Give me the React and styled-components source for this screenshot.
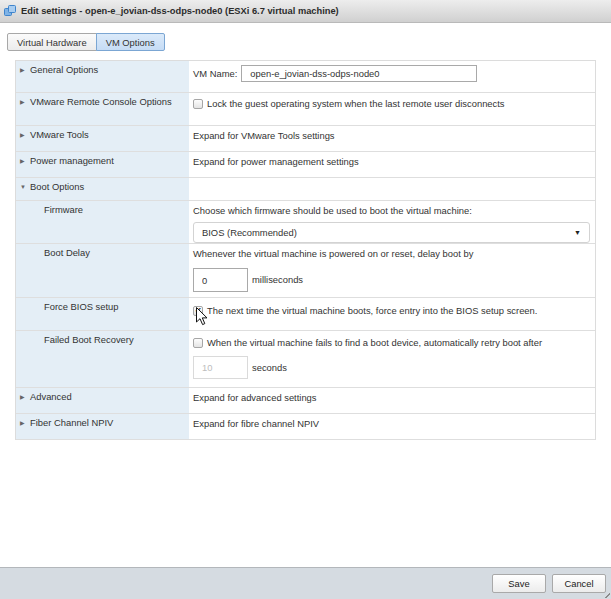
import React from 'react';
import styled, { createGlobalStyle } from 'styled-components';

const GlobalStyle = createGlobalStyle`
  html, body { margin: 0; padding: 0; background: #fff; }
  body {
    font-family: "Liberation Sans", Arial, sans-serif;
    font-size: 9.4px;
    color: #333;
  }
`;

const rows = [
  { label: 'General Options', arrow: 'right', h: 32, kind: 'name' },
  { label: 'VMware Remote Console Options', arrow: 'right', h: 33, kind: 'lock' },
  { label: 'VMware Tools', arrow: 'right', h: 26, text: 'Expand for VMware Tools settings' },
  { label: 'Power management', arrow: 'right', h: 26, text: 'Expand for power management settings' },
  { label: 'Boot Options', arrow: 'down', h: 23, text: '' },
  { label: 'Firmware', sub: true, h: 43, kind: 'firmware' },
  { label: 'Boot Delay', sub: true, h: 54, kind: 'delay' },
  { label: 'Force BIOS setup', sub: true, h: 33, kind: 'bios' },
  { label: 'Failed Boot Recovery', sub: true, h: 57, kind: 'retry' },
  { label: 'Advanced', arrow: 'right', h: 26, text: 'Expand for advanced settings' },
  { label: 'Fiber Channel NPIV', arrow: 'right', h: 26, text: 'Expand for fibre channel NPIV' },
];

function VmIcon() {
  return (
    <svg width="12" height="11" viewBox="0 0 12 11">
      <rect x="0.5" y="3.5" width="7" height="7" rx="1" fill="#7fb3e6" stroke="#3f84cc" />
      <rect x="4.5" y="0.5" width="7" height="7" rx="1" fill="#a9cdf0" stroke="#3f84cc" />
    </svg>
  );
}

function Cursor() {
  return (
    <svg width="12" height="19" viewBox="0 0 12 19">
      <path
        d="M0.5 0.5 L0.5 15 L4 11.7 L6.6 17.6 L8.8 16.6 L6.3 10.9 L11 10.9 Z"
        fill="#fff"
        stroke="#111"
        strokeWidth="1"
        strokeLinejoin="round"
      />
    </svg>
  );
}

export default function App() {
  const renderValue = (row) => {
    switch (row.kind) {
      case 'name':
        return (
          <Line>
            VM Name:
            <TextField $w={236} $h={17} $ml={4} defaultValue="open-e_jovian-dss-odps-node0" />
          </Line>
        );
      case 'lock':
        return (
          <Line $top={1}>
            <Check />
            Lock the guest operating system when the last remote user disconnects
          </Line>
        );
      case 'firmware':
        return (
          <>
            <Line>Choose which firmware should be used to boot the virtual machine:</Line>
            <Select>
              <span>BIOS (Recommended)</span>
              <Caret>▼</Caret>
            </Select>
          </>
        );
      case 'delay':
        return (
          <>
            <Line>Whenever the virtual machine is powered on or reset, delay boot by</Line>
            <Line $top={8}>
              <TextField $w={55} $h={24} $mr={4} defaultValue="0" />
              milliseconds
            </Line>
          </>
        );
      case 'bios':
        return (
          <Line $top={3}>
            <CheckWrap>
              <Check $checked>✔</Check>
              <CursorSpot>
                <Cursor />
              </CursorSpot>
            </CheckWrap>
            The next time the virtual machine boots, force entry into the BIOS setup screen.
          </Line>
        );
      case 'retry':
        return (
          <>
            <Line $top={2}>
              <Check />
              When the virtual machine fails to find a boot device, automatically retry boot after
            </Line>
            <Line $top={7}>
              <TextField $w={55} $h={23} $mr={4} $disabled defaultValue="10" disabled />
              seconds
            </Line>
          </>
        );
      default:
        return <Line>{row.text}</Line>;
    }
  };

  return (
    <Page>
      <GlobalStyle />
      <TitleBar>
        <VmIcon />
        <span>Edit settings - open-e_jovian-dss-odps-node0 (ESXi 6.7 virtual machine)</span>
      </TitleBar>

      <Body>
        <Tabs>
          <Tab>Virtual Hardware</Tab>
          <Tab $active>VM Options</Tab>
        </Tabs>

        <Table>
          {rows.map((row) => (
            <Row key={row.label} $h={row.h}>
              <LabelCell $sub={row.sub}>
                {row.arrow && <Arrow>{row.arrow === 'down' ? '▼' : '▶'}</Arrow>}
                {row.label}
              </LabelCell>
              <ValueCell>{renderValue(row)}</ValueCell>
            </Row>
          ))}
        </Table>
      </Body>

      <Footer>
        <Button>Save</Button>
        <Button>Cancel</Button>
        <Grip />
      </Footer>
    </Page>
  );
}

const Page = styled.div`
  height: 100vh;
  display: flex;
  flex-direction: column;
  overflow: hidden;
`;

const TitleBar = styled.div`
  height: 23px;
  box-sizing: border-box;
  display: flex;
  align-items: center;
  gap: 5px;
  padding: 0 0 1px 4px;
  background: linear-gradient(#ededed, #d0d0d0);
  border-bottom: 1px solid #b9b9b9;
  font-weight: bold;
  font-size: 9.3px;
  color: #2b2b2b;
`;

const Body = styled.div`
  flex: 1;
  padding: 10px 15px 0 7px;
`;

const Tabs = styled.div`
  display: flex;
  height: 18px;
`;

const Tab = styled.div`
  box-sizing: border-box;
  height: 18px;
  padding: 0 9px;
  display: flex;
  align-items: center;
  border: 1px solid ${(p) => (p.$active ? '#7ba6d3' : '#a8a8a8')};
  background: ${(p) => (p.$active ? 'linear-gradient(#dbeafa, #c6dcf5)' : 'linear-gradient(#fbfbfb, #ececec)')};
  border-radius: ${(p) => (p.$active ? '0 2px 2px 0' : '2px 0 0 2px')};
  margin-left: ${(p) => (p.$active ? '-1px' : '0')};
  color: #333;
`;

const Table = styled.div`
  margin: 9px 0 0 8px;
  border: 1px solid #dcdcdc;
  border-bottom: none;
`;

const Row = styled.div`
  display: grid;
  grid-template-columns: 173px 1fr;
  height: ${(p) => p.$h}px;
  box-sizing: border-box;
  border-bottom: 1px solid #dedede;
`;

const LabelCell = styled.div`
  background: #e4eef6;
  padding: 3px 0 0 ${(p) => (p.$sub ? '28px' : '4px')};
  line-height: 12px;
  display: flex;
  align-items: flex-start;
  gap: 4px;
`;

const Arrow = styled.span`
  font-size: 6px;
  color: #666;
  line-height: 12px;
  width: 6px;
`;

const ValueCell = styled.div`
  padding: 4px 5px 0 4px;
  line-height: 12px;
`;

const Line = styled.div`
  display: flex;
  align-items: center;
  min-height: 12px;
  margin-top: ${(p) => p.$top || 0}px;
  white-space: nowrap;
`;

const TextField = styled.input`
  box-sizing: border-box;
  width: ${(p) => p.$w}px;
  height: ${(p) => p.$h}px;
  margin: 0 ${(p) => p.$mr || 0}px 0 ${(p) => p.$ml || 0}px;
  padding: 0 8px 0 4px;
  border: 1px solid ${(p) => (p.$disabled ? '#dadada' : '#a9a9a9')};
  border-radius: 0;
  background: #fff;
  font-family: "Liberation Sans", Arial, sans-serif;
  font-size: 9.4px;
  color: ${(p) => (p.$disabled ? '#bdbdbd' : '#333')};
  outline: none;
  &:first-child {
    padding-left: 8px;
  }
`;

const Check = styled.span`
  box-sizing: border-box;
  width: 10px;
  height: 10px;
  margin-right: 4px;
  border: 1px solid #a6a6a6;
  border-radius: 2px;
  background: linear-gradient(#fdfdfd, #e4e4e4);
  font-size: 8px;
  line-height: 8px;
  text-align: center;
  color: #222;
  flex-shrink: 0;
`;

const CheckWrap = styled.span`
  position: relative;
  display: flex;
`;

const CursorSpot = styled.span`
  position: absolute;
  left: 3px;
  top: 1px;
  line-height: 0;
`;

const Select = styled.div`
  box-sizing: border-box;
  margin-top: 5px;
  height: 21px;
  width: 397px;
  padding: 0 8px;
  display: flex;
  align-items: center;
  justify-content: space-between;
  border: 1px solid #d3d3d3;
  border-radius: 3px;
  background: #fff;
`;

const Caret = styled.span`
  font-size: 7px;
  color: #222;
`;

const Footer = styled.div`
  position: relative;
  height: 32px;
  box-sizing: border-box;
  padding: 6px 5px 0 0;
  display: flex;
  justify-content: flex-end;
  align-items: flex-start;
  gap: 6px;
  background: #d5dbe1;
  border-top: 1px solid #b3b7bb;
`;

const Button = styled.button`
  box-sizing: border-box;
  width: 54px;
  height: 19px;
  padding: 0;
  border: 1px solid #a9a9a9;
  border-radius: 2px;
  background: linear-gradient(#ffffff, #ececec);
  font-family: "Liberation Sans", Arial, sans-serif;
  font-size: 9.4px;
  color: #222;
`;

const Grip = styled.span`
  position: absolute;
  right: 1px;
  bottom: 1px;
  width: 5px;
  height: 5px;
  background: linear-gradient(135deg, transparent 50%, #8a8a8a 50%, #8a8a8a 62%, transparent 62%);
`;
